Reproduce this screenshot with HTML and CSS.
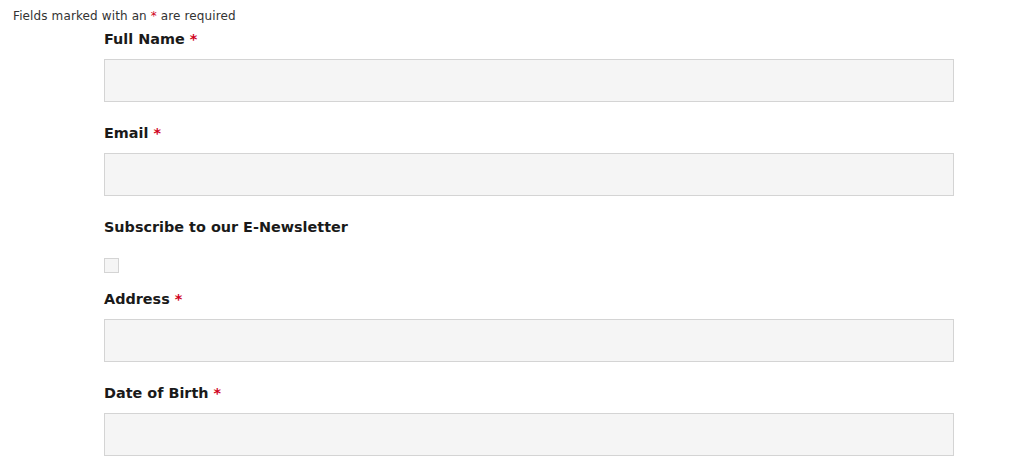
FILE: index.html
```html
<!DOCTYPE html>
<html>
<head>
<meta charset="utf-8">
<title>Sign up</title>
<link rel="stylesheet" href="styles.css">
</head>
<body>
<p class="req-note">Fields marked with an <span class="star">*</span> are required</p>
<form class="signup">
  <div class="field">
    <label class="lbl" for="fullname">Full Name <span class="star">*</span></label>
    <input class="box" type="text" id="fullname">
  </div>
  <div class="field">
    <label class="lbl" for="email">Email <span class="star">*</span></label>
    <input class="box" type="text" id="email">
  </div>
  <div class="field">
    <label class="lbl" for="news">Subscribe to our E-Newsletter</label>
    <span class="check" id="news"></span>
  </div>
  <div class="field">
    <label class="lbl" for="address">Address <span class="star">*</span></label>
    <input class="box" type="text" id="address">
  </div>
  <div class="field">
    <label class="lbl" for="dob">Date of Birth <span class="star">*</span></label>
    <input class="box" type="text" id="dob">
  </div>
</form>
</body>
</html>
```
FILE: styles.css
```css
body {
margin: 0;
background: #fff;
color: #1a1a1a;
font-family: "DejaVu Sans", sans-serif;
}
.req-note {
margin: 0;
padding: 8px 0 0 13px;
font-size: 12px;
letter-spacing: 0.12px;
line-height: 16px;
color: #333;
}
.star {
color: #d0021b;
}
.signup {
padding: 0 0 0 104px;
width: 850px;
}
.field {
display: flex;
flex-direction: column;
align-items: flex-start;
}
.lbl {
display: block;
font-size: 14.4px;
font-weight: bold;
line-height: 24px;
margin: 3px 0 8px;
}
.box {
box-sizing: border-box;
width: 850px;
height: 43px;
margin: 0 0 16px;
border: 1px solid #d4d4d4;
background: #f5f5f5;
}
.check {
box-sizing: border-box;
display: block;
width: 15px;
height: 15px;
margin: 11px 0 11px;
border: 1px solid #d4d4d4;
background: #f5f5f5;
}
```
